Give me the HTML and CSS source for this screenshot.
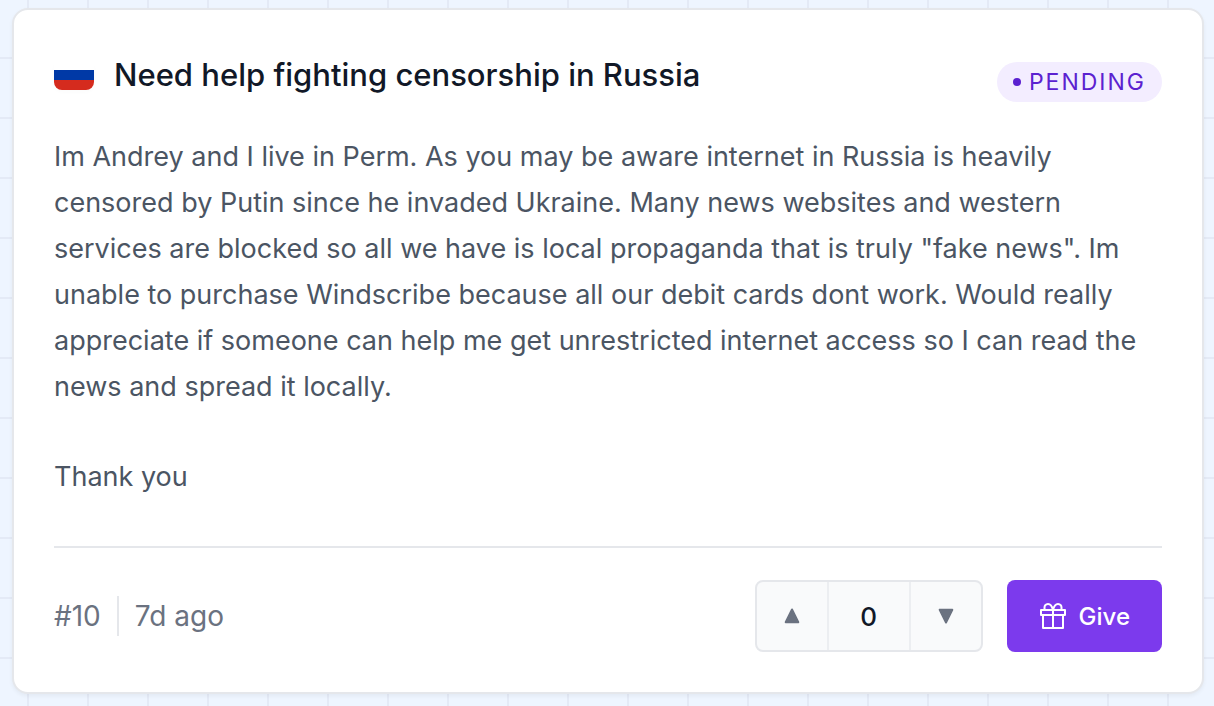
FILE: index.html
```html
<!DOCTYPE html>
<html lang="en">
<head>
    <meta charset="UTF-8">
    <meta name="viewport" content="width=device-width, initial-scale=1.0">
    <link rel="stylesheet" href="styles.css">
    <title>Need help fighting censorship in Russia</title>
</head>
<body>
    <article class="card">
        <header class="card-header">
            <div class="heading">
                <svg class="flag" viewBox="0 0 40 30" role="img" aria-label="Russia">
                    <rect width="40" height="10" fill="#ffffff"/>
                    <rect y="10" width="40" height="10" fill="#0039a6"/>
                    <rect y="20" width="40" height="10" fill="#d52b1e"/>
                </svg>
                <h1 class="title">Need help fighting censorship in Russia</h1>
            </div>
            <span class="status">Pending</span>
        </header>

        <div class="message">
            <p>Im Andrey and I live in Perm. As you may be aware internet in Russia is heavily censored by Putin since he invaded Ukraine. Many news websites and western services are blocked so all we have is local propaganda that is truly "fake news". Im unable to purchase Windscribe because all our debit cards dont work. Would really appreciate if someone can help me get unrestricted internet access so I can read the news and spread it locally.</p>
            <p>Thank you</p>
        </div>

        <footer class="card-footer">
            <div class="meta">
                <span class="number">#10</span>
                <span class="age">7d ago</span>
            </div>
            <div class="votes">
                <button type="button" class="vote" aria-label="Vote up">
                    <svg viewBox="0 0 16 16"><path d="M8 1.5 14.3 14.3H1.7Z"/></svg>
                </button>
                <span class="count">0</span>
                <button type="button" class="vote" aria-label="Vote down">
                    <svg viewBox="0 0 16 16"><path d="M8 14.5 1.7 1.7H14.3Z"/></svg>
                </button>
            </div>
            <button type="button" class="give">
                <svg viewBox="0 0 28 28">
                    <rect x="2" y="8" width="24" height="5"/>
                    <path d="M4 13V26H24V13M14 8V26M14 8C13 4 11.500 2 9 2S5.500 4 5.500 5.500V8M14 8C15 4 16.500 2 19 2S22.500 4 22.500 5.500V8"/>
                </svg>
                Give
            </button>
        </footer>
    </article>
</body>
</html>
```
FILE: styles.css
```css
* {
    box-sizing: border-box;
}

body {
    margin: 0;
    padding: 8px 10px 12px 12px;
    font-family: Inter, "Liberation Sans", sans-serif;
    background-color: #eef5ff;
    background-image:
        linear-gradient(to right, #e4eaf6 2px, transparent 2px),
        linear-gradient(to bottom, #e4eaf6 2px, transparent 2px);
    background-size: 60px 60px;
    background-position: 27px 57px;
}

.card {
    padding: 40px;
    background: white;
    border: 2px solid #e5e7eb;
    border-radius: 16px;
    box-shadow: 0 2px 4px rgba(0, 0, 0, 0.05);
}

.card-header {
    display: flex;
    justify-content: space-between;
    gap: 20px;
}

.heading {
    display: flex;
    align-items: center;
    align-self: flex-start;
    gap: 20px;
}

.flag {
    flex-shrink: 0;
    width: 40px;
    height: 30px;
    border-radius: 8px;
    box-shadow: 0 2px 4px rgba(0, 0, 0, 0.02);
}

.title {
    margin: 0;
    font-size: 31px;
    font-weight: 500;
    line-height: 50px;
    color: #111827;
}

.status {
    display: flex;
    align-items: center;
    gap: 8px;
    height: 40px;
    margin-top: 12px;
    padding: 0 16px;
    border-radius: 20px;
    background: #f3edff;
    color: #5b21d0;
    font-size: 23px;
    letter-spacing: 2px;
    text-transform: uppercase;
}

.status::before {
    content: "";
    width: 8px;
    height: 8px;
    border-radius: 50%;
    background: currentColor;
}

.message {
    margin-top: 32px;
    padding-bottom: 46px;
    border-bottom: 2px solid #e5e7eb;
    font-size: 27px;
    line-height: 46px;
    color: #4b5563;
}

.message p {
    margin: 0;
}

.message p + p {
    margin-top: 44px;
}

.card-footer {
    display: flex;
    align-items: center;
    gap: 24px;
    padding-top: 32px;
}

.meta {
    display: flex;
    flex: 1;
    font-size: 28px;
    line-height: 40px;
    color: #6b7280;
}

.age {
    margin-left: 16px;
    padding-left: 16px;
    border-left: 2px solid #e5e7eb;
}

.votes {
    display: flex;
    height: 72px;
    border: 2px solid #e5e7eb;
    border-radius: 8px;
    background: #f9fafb;
    overflow: hidden;
}

.vote {
    display: flex;
    align-items: center;
    justify-content: center;
    width: 70px;
    padding: 0;
    border: none;
    background: none;
    cursor: pointer;
}

.vote svg {
    width: 16px;
    height: 16px;
    fill: #6b7280;
    stroke: #6b7280;
    stroke-width: 2;
    stroke-linejoin: round;
}

.count {
    display: flex;
    align-items: center;
    justify-content: center;
    width: 84px;
    border: solid #eceef1;
    border-width: 0 2px;
    font-size: 26px;
    font-weight: 500;
    color: #111827;
}

.give {
    display: flex;
    align-items: center;
    gap: 12px;
    height: 72px;
    padding: 0 32px;
    border: none;
    border-radius: 8px;
    background: #7c3aed;
    color: white;
    font-family: inherit;
    font-size: 24px;
    font-weight: 500;
    cursor: pointer;
}

.give svg {
    width: 28px;
    height: 28px;
    fill: none;
    stroke: white;
    stroke-width: 2;
    stroke-linejoin: round;
}
```
